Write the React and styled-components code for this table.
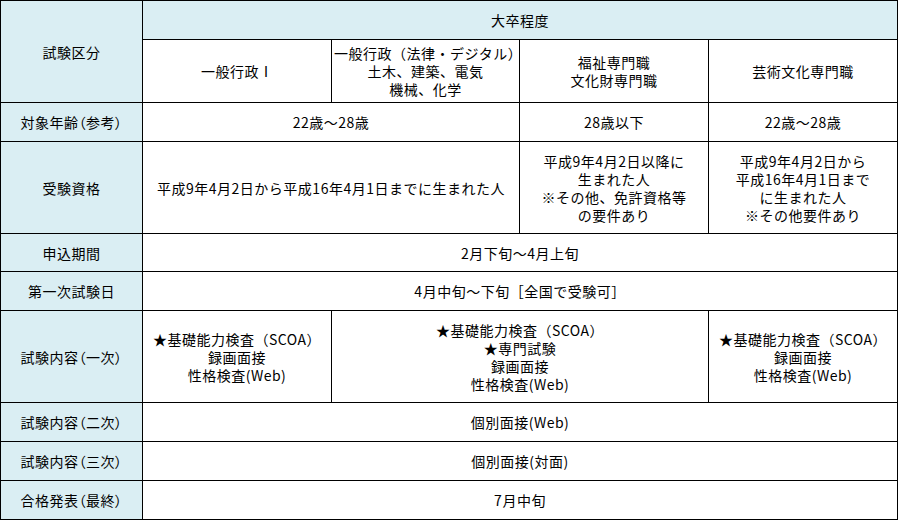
import React from "react";
import styled, { createGlobalStyle } from "styled-components";

const GlobalStyle = createGlobalStyle`
  html, body {
    margin: 0;
    padding: 0;
    background: #fff;
  }
  body {
    font-family: "Noto Sans CJK JP", "Noto Sans", sans-serif;
    color: #000;
  }
`;

const columns = [142, 189, 188, 189, 189];

const Lines = ({ children }) =>
  children.split("\n").map((line, i) => <Line key={i}>{line}</Line>);

export default function App() {
  return (
    <>
      <GlobalStyle />
      <Table>
        <colgroup>
          {columns.map((w, i) => (
            <col key={i} style={{ width: w }} />
          ))}
        </colgroup>
        <tbody>
          <Row $h={39}>
            <Cell $head rowSpan={2}>試験区分</Cell>
            <Cell $head colSpan={4}>大卒程度</Cell>
          </Row>
          <Row $h={63}>
            <Cell>
              一般行政<Numeral>Ⅰ</Numeral>
            </Cell>
            <Cell>
              <Lines>{"一般行政（法律・デジタル）\n土木、建築、電気\n機械、化学"}</Lines>
            </Cell>
            <Cell>
              <Lines>{"福祉専門職\n文化財専門職"}</Lines>
            </Cell>
            <Cell>芸術文化専門職</Cell>
          </Row>
          <Row $h={39}>
            <Cell $head>対象年齢（参考）</Cell>
            <Cell colSpan={2}>22歳～28歳</Cell>
            <Cell>28歳以下</Cell>
            <Cell>22歳～28歳</Cell>
          </Row>
          <Row $h={92}>
            <Cell $head>受験資格</Cell>
            <Cell colSpan={2}>平成9年4月2日から平成16年4月1日までに生まれた人</Cell>
            <Cell>
              <Lines>{"平成9年4月2日以降に\n生まれた人\n※その他、免許資格等\nの要件あり"}</Lines>
            </Cell>
            <Cell>
              <Lines>{"平成9年4月2日から\n平成16年4月1日まで\nに生まれた人\n※その他要件あり"}</Lines>
            </Cell>
          </Row>
          <Row $h={38}>
            <Cell $head>申込期間</Cell>
            <Cell colSpan={4}>2月下旬～4月上旬</Cell>
          </Row>
          <Row $h={39}>
            <Cell $head>第一次試験日</Cell>
            <Cell colSpan={4}>4月中旬～下旬［全国で受験可］</Cell>
          </Row>
          <Row $h={92}>
            <Cell $head>試験内容（一次）</Cell>
            <Cell>
              <Lines>{"★基礎能力検査（SCOA）\n録画面接\n性格検査(Web)"}</Lines>
            </Cell>
            <Cell colSpan={2}>
              <Lines>{"★基礎能力検査（SCOA）\n★専門試験\n録画面接\n性格検査(Web)"}</Lines>
            </Cell>
            <Cell>
              <Lines>{"★基礎能力検査（SCOA）\n録画面接\n性格検査(Web)"}</Lines>
            </Cell>
          </Row>
          <Row $h={39}>
            <Cell $head>試験内容（二次）</Cell>
            <Cell colSpan={4}>個別面接(Web)</Cell>
          </Row>
          <Row $h={39}>
            <Cell $head>試験内容（三次）</Cell>
            <Cell colSpan={4}>個別面接(対面)</Cell>
          </Row>
          <Row $h={39}>
            <Cell $head>合格発表（最終）</Cell>
            <Cell colSpan={4}>7月中旬</Cell>
          </Row>
        </tbody>
      </Table>
    </>
  );
}

const Table = styled.table`
  width: 898px;
  table-layout: fixed;
  border-collapse: collapse;
  font-size: 14px;
  line-height: 18px;
  letter-spacing: 0.5px;
`;

const Row = styled.tr`
  height: ${(p) => p.$h}px;
`;

const Cell = styled.td`
  border: 1px solid #000;
  padding: 0 2px;
  text-align: center;
  vertical-align: middle;
  background: ${(p) => (p.$head ? "#daeef3" : "#fff")};
  font-feature-settings: ${(p) => (p.$head ? '"palt"' : "normal")};
  white-space: nowrap;
`;

const Line = styled.div`
  display: block;
`;

const Numeral = styled.span`
  display: inline-block;
  width: 1em;
  text-align: center;
`;
